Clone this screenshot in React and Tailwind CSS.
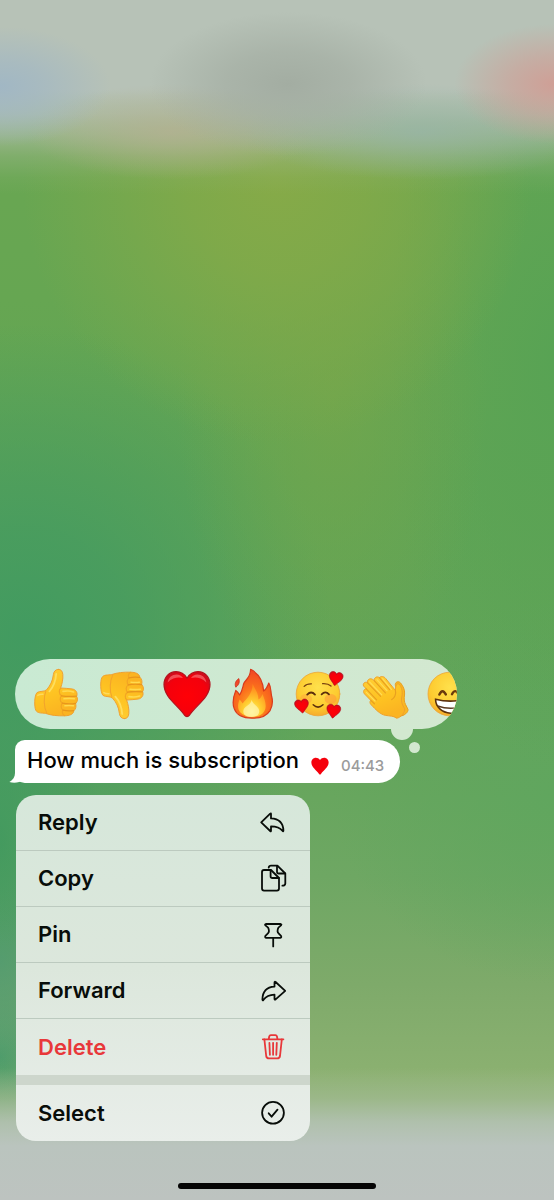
import { useState } from "react";
import clsx from "clsx";

const ReplyIcon = () => (
  <path d="M1.2 13.3 L10.2 4.6 Q11 4 11 5 V9.4 C18.5 9.8 23.2 14 23.4 21.6 Q23.3 23 22.4 21.8 C19.8 18.4 16.8 17.4 11 17.4 V21.7 Q11 22.8 10.2 22 Z" />
);

const CopyIcon = () => (
  <>
    <path d="M4 5 H11 L19 13 V23.6 Q19 25.6 17 25.6 H4 Q2 25.6 2 23.6 V7 Q2 5 4 5 Z" />
    <path d="M10.6 5.2 V11.2 Q10.6 13 12.4 13 H18.8" />
    <path d="M8.7 2.6 Q9 0.6 11 0.6 H17.4 L25.3 8.5 V18.4 Q25.3 20.6 22.4 20.7" />
    <path d="M17 0.8 V6.7 Q17 8.5 18.8 8.5 H25" />
  </>
);

const PinIcon = () => (
  <>
    <path d="M5.8 3 H20.7 Q22 3.4 21 4.4 L18.4 6.6 Q16.6 10.4 18.6 12.4 L21 14.8 Q21.8 16.6 20.4 16.8 H6 Q4.7 16.6 5.4 14.8 L7.9 12.4 Q9.9 10.4 8.1 6.6 L5.4 4.4 Q4.5 3.4 5.8 3 Z" />
    <path d="M13.2 17 V25.4" />
  </>
);

const ForwardIcon = () => (
  <path d="M25.2 13.9 L15.6 5 Q14.6 4.3 14.5 5.5 V9.6 C7 10 2.6 14.4 2.4 22.4 Q2.5 24 3.5 22.8 C6 19.4 8.8 17.8 14.5 17.6 V21.9 Q14.6 23.1 15.6 22.4 Z" />
);

const TrashIcon = () => (
  <>
    <path d="M2.8 6.3 H23.4 M8.7 6 L9.3 3.2 Q9.6 2.2 10.8 2.2 H15.4 Q16.6 2.2 16.9 3.2 L17.5 6" />
    <path d="M4.4 6.5 L6.2 23 Q6.6 25.4 9 25.4 H17.2 Q19.6 25.4 20 23 L21.8 6.5" />
    <path d="M9.4 9.8 L9.9 21.8 M13.1 9.8 V21.8 M16.8 9.8 L16.3 21.8" />
  </>
);

const SelectIcon = () => (
  <>
    <circle cx="13" cy="13.8" r="10.9" />
    <path d="M8.7 14.3 L11.6 17.7 L17.5 10.6" />
  </>
);

const actions = [
  { label: "Reply", Icon: ReplyIcon },
  { label: "Copy", Icon: CopyIcon },
  { label: "Pin", Icon: PinIcon },
  { label: "Forward", Icon: ForwardIcon },
  { label: "Delete", Icon: TrashIcon, danger: true },
];

const MenuItem = ({ label, Icon, danger }) => (
  <button
    type="button"
    role="menuitem"
    className={clsx(
      "flex h-14 w-full items-center justify-between px-[22px] text-[22px] font-semibold",
      danger ? "text-[#e8383a]" : "text-[#080d09]"
    )}
  >
    {label}
    <svg
      viewBox="0 0 28 28"
      className="h-7 w-7 overflow-visible"
      fill="none"
      stroke="currentColor"
      strokeWidth="1.8"
      strokeLinecap="round"
      strokeLinejoin="round"
      aria-hidden="true"
    >
      <Icon />
    </svg>
  </button>
);

const HEART =
  "M23 8.2 C20.2 3.6 16 1.7 12 1.7 C5 1.7 0 7.4 0 14.6 C0 27.4 13.6 35 20.4 45 Q23 48.2 25.6 45 C32.4 35 46 27.4 46 14.6 C46 7.4 41 1.7 34 1.7 C30 1.7 25.8 3.6 23 8.2 Z";

const Thumb = () => (
  <g strokeLinecap="round" strokeLinejoin="round">
    <path
      d="M26.4 -0.6 C23.4 -0.6 21.8 1.4 21.4 4.6 C20.6 11 18.4 15.4 14.6 19.8 C12.4 22 7.6 20.8 5 22.6 C2.2 25.6 2.2 37 3.8 40.2 C5.4 43.6 10 42.8 13.6 43.4 C19 45.4 26 46 32 45.8 C38 45.8 41.4 44.2 41.8 40.8 C44 39 44.4 36 43.6 33.6 C45.8 31.4 46 28.4 44.6 26.4 C46 23 44 19.6 40.4 19 C36 18.2 32.4 18.4 28.6 18 C30.2 13.4 31.2 9.2 30.8 4.4 C30.4 1 29.2 -0.6 26.4 -0.6 Z"
      fill="url(#skin)"
      stroke="#efa032"
      strokeWidth="1"
    />
    <path
      d="M28.8 18.4 C26.6 19.4 26.8 24.4 29.6 25.6 C27.6 27.4 27.6 32 30.4 33 C28.6 35 28.8 38.8 31 40 C29.8 42 30.4 44.6 32.6 45.6"
      fill="none"
      stroke="#f2a524"
      strokeWidth="1.2"
    />
    <path
      d="M29.6 25.8 C35 26.8 40 26.6 44.4 26.2 M30.4 33.2 C35 34.2 40 34 43.6 33.4 M31 40.2 C35 41.2 38 41.2 41.6 40.6"
      fill="none"
      stroke="#e8961c"
      strokeWidth="1.3"
    />
    <path
      d="M31 21.4 Q37 20.4 41.6 22 M32 28.8 Q37 28 42.4 28.8 M33 35.8 Q37 35.2 41.4 35.8"
      fill="none"
      stroke="#ffda50"
      strokeWidth="1.6"
    />
    <path d="M13.8 21.4 C11.4 27 11.8 37.4 14.6 42.6" fill="none" stroke="#f2a42c" strokeWidth="1.1" />
    <path d="M24.2 4 C23.6 11.6 21.4 17 17.4 21.4" fill="none" stroke="#ffde5e" strokeWidth="1.8" />
    <path d="M5.8 25.4 Q8 24 11 24.2" fill="none" stroke="#ffda5c" strokeWidth="1.4" />
  </g>
);

const ThumbDown = () => (
  <g transform="translate(0 48) scale(1 -1)">
    <Thumb />
  </g>
);

const Heart = () => (
  <g>
    <path d={HEART} fill="url(#heart)" stroke="#b3121d" strokeWidth="1.2" />
    <path
      d="M3.6 12.4 C4.6 7.4 8 4.8 12.6 4.6 C15.6 4.8 17.4 6 19 8 C15 7 9 7 3.6 12.4 Z M42.4 12.4 C41.4 7.4 38 4.8 33.4 4.6 C30.4 4.8 28.6 6 27 8 C31 7 37 7 42.4 12.4 Z"
      fill="#ff8d8d"
      opacity="0.55"
    />
  </g>
);

const Fire = () => (
  <g strokeLinejoin="round">
    <path
      d="M20.6 -0.7 C27 2.6 33 9.4 33.6 21 C36 19.4 37.6 16.4 38.8 13 C41.4 17.4 40.6 21.6 41.6 26 C43 31 42.4 36.4 40 40.6 C36.4 46.4 29 48.4 22 48.2 C14 48.2 6.6 45.4 4.2 38.6 C1.6 32 3.6 26 5.8 20.4 C7.4 21.4 8.6 23 9.6 25 C12 21.6 12.4 18.6 13.6 14 C15 9.6 20.6 8.4 20.6 -0.7 Z"
      fill="url(#flame)"
      stroke="#d93a1c"
      strokeWidth="1.2"
    />
    <path
      d="M8.8 8.6 C9.8 11.4 9.4 14.6 5.8 17.2 C4.4 13.8 5.6 10.8 8.8 8.6 Z"
      fill="#f0482a"
      stroke="#c9301c"
      strokeWidth="0.8"
    />
    <path
      d="M22.6 14 C25 19 28.6 23.4 28.4 29.6 C30.6 28.4 31.8 26.4 32.4 24 C36 32 37.4 39 32.6 43.4 C27 48 15 47.8 10.4 42.6 C7 38.6 7.8 33.4 9.6 29.4 C11 31 11.8 32 12.6 33.4 C16.6 28.6 22.6 23.6 22.6 14 Z"
      fill="url(#flameInner)"
    />
    <path
      d="M21.6 30 C23 34 26.6 35.6 28.4 38.4 C31 43 27.4 47 21.6 47 C15 47 11.8 43 14 38.8 C16 35.6 20.6 35 21.6 30 Z"
      fill="#fff6b0"
      opacity="0.7"
    />
  </g>
);

const FaceHearts = () => (
  <g fill="none" strokeLinecap="round">
    <circle cx="22" cy="24" r="21.8" fill="url(#face)" stroke="#eda436" strokeWidth="0.8" />
    <ellipse cx="10" cy="29" rx="6" ry="5" fill="#ff9d3c" opacity="0.4" />
    <ellipse cx="34.6" cy="29" rx="6" ry="5" fill="#ff8a3c" opacity="0.45" />
    <path d="M8.2 16.4 Q10.6 13.6 15.4 13.8 M26.6 13.6 Q32 13.2 35 16" stroke="#7a4310" strokeWidth="1.3" />
    <path d="M11.2 24.6 Q15.2 20.4 19 24.6 M25.6 24.4 Q29.4 20.4 33 24.4" stroke="#5c2f0c" strokeWidth="1.8" />
    <path d="M17.2 34.8 Q22 39.4 27 34.8" stroke="#5c2f0c" strokeWidth="1.5" />
    <g fill="url(#heart)" stroke="#a80f20" strokeWidth="2">
      <path d={HEART} transform="translate(34.2 0.4) rotate(10) scale(.3)" />
      <path d={HEART} transform="translate(-2 30) rotate(-8) scale(.3)" />
      <path d={HEART} transform="translate(31.6 33.2) rotate(8) scale(.3)" />
    </g>
  </g>
);

const Clap = () => (
  <g strokeLinecap="round" strokeLinejoin="round">
    <path
      d="M30 22 C34 23 34.6 19 33.4 15.6 C32.6 12 36.4 10.4 38.6 13 C41 16 43 19.6 42.6 24 C42 29 42 31.4 43.6 34.6 L46 39.4 C46.6 42 42 46 38.6 46 Z"
      fill="#f9b822"
      stroke="#e89c24"
      strokeWidth="1"
    />
    <path
      d="M17.4 7.6 C19 5.6 22 6.4 23.6 8.4 L33.4 20.4 C33.6 16.4 34.4 12.6 37 14 C40 17 41 22.6 39.6 28 C39 32 40.4 35 42.6 38.6 C43.6 42 38.6 48 34.6 48.2 C31.4 45.6 27.6 46.2 23.6 45.4 C18 44.4 13.6 39.4 9.4 35 C7.6 33.4 7.6 31.4 8.8 30.4 L2.6 24 C0.6 21.8 2 18.8 4.2 18.8 L1.6 16 C0.4 13.6 3 11.2 5.6 12.8 C4.4 10.2 8 7.6 10.6 9.4 L12.4 10.8 C11.4 8 15 5.6 17.4 7.6 Z"
      fill="url(#skin)"
      stroke="#eda030"
      strokeWidth="1"
    />
    <path
      d="M4.2 18.8 L14.6 29.8 M5.6 12.8 L18.6 26.4 M12.4 10.8 L23.4 22.8 M17.4 7.6 L27.6 19.6 M8.8 30.4 L12.4 33.8"
      fill="none"
      stroke="#e8a020"
      strokeWidth="1.2"
    />
    <path
      d="M7.6 12 L19.8 24.8 M15 9.6 L25 20.6 M4.4 22.4 L13 31 M20.6 8.6 L29.4 19.4"
      fill="none"
      stroke="#ffdc58"
      strokeWidth="1.2"
    />
    <path d="M33.4 20.4 C34.4 24 32.6 28 29.8 29.6" fill="none" stroke="#e8a020" strokeWidth="1.2" />
  </g>
);

const Grin = () => (
  <g fill="none" strokeLinecap="round">
    <circle cx="21.8" cy="24" r="21.8" fill="url(#face)" stroke="#eda436" strokeWidth="0.8" />
    <path d="M11.4 24.6 Q14.4 18 17.8 24.4 M24 24.2 Q27.2 18 30.6 24.4" stroke="#6b3a0c" strokeWidth="2.4" />
    <path
      d="M7.6 29.2 C16 31.4 27 31.6 36.4 29.6 C37.4 38 30.4 43.6 22.6 43.2 C14 42.6 7.4 37 7.6 29.2 Z"
      fill="#fff"
      stroke="#5c2f0c"
      strokeWidth="1.6"
    />
    <path d="M9.6 36 C17 38.6 27 38.8 35 36.4" stroke="#5c3a20" strokeWidth="1.5" />
  </g>
);

const reactions = [
  { name: "Thumbs up", Emoji: Thumb },
  { name: "Thumbs down", Emoji: ThumbDown },
  { name: "Heart", Emoji: Heart },
  { name: "Fire", Emoji: Fire },
  { name: "Smiling face with hearts", Emoji: FaceHearts },
  { name: "Clap", Emoji: Clap },
  { name: "Grin", Emoji: Grin },
];

// shared fills for the emoji
const Gradients = () => (
  <svg className="absolute h-0 w-0" aria-hidden="true">
    <defs>
      <linearGradient id="skin" x1="0" y1="0" x2="0.4" y2="1">
        <stop offset="0" stopColor="#ffcf36" />
        <stop offset="0.6" stopColor="#fec322" />
        <stop offset="1" stopColor="#fbb422" />
      </linearGradient>
      <radialGradient id="heart" cx="0.5" cy="0.55" r="0.6">
        <stop offset="0" stopColor="#ff0006" />
        <stop offset="0.75" stopColor="#f4000c" />
        <stop offset="1" stopColor="#cf0c1c" />
      </radialGradient>
      <radialGradient id="flame" cx="0.5" cy="0.75" r="0.75">
        <stop offset="0" stopColor="#ffb428" />
        <stop offset="0.5" stopColor="#fb701c" />
        <stop offset="1" stopColor="#f04424" />
      </radialGradient>
      <radialGradient id="flameInner" cx="0.5" cy="0.85" r="0.8">
        <stop offset="0" stopColor="#fff08c" />
        <stop offset="0.4" stopColor="#ffcf30" />
        <stop offset="1" stopColor="#ff841c" />
      </radialGradient>
      <radialGradient id="face" cx="0.5" cy="0.35" r="0.65">
        <stop offset="0" stopColor="#ffe14c" />
        <stop offset="0.7" stopColor="#fdcb30" />
        <stop offset="1" stopColor="#f6ac2c" />
      </radialGradient>
    </defs>
  </svg>
);

// green wallpaper first, then the grey bars over it, then the colours that show through the top bar
const Backdrop = () => (
  <div className="absolute inset-0 -z-10 bg-[linear-gradient(180deg,#6ca652_0%,#66a652_25%,#60a455_40%,#62a559_60%,#6ea763_73%,#7eaa6a_82%,#8cb171_90%,#94b67a_100%)]">
    <div className="absolute inset-0 bg-[radial-gradient(ellipse_46%_22%_at_50%_15%,#86aa48_0%,#84aa48cc_35%,#84aa4800_100%),radial-gradient(ellipse_28%_26%_at_60%_33%,#76a64aaa_0%,#72a65000_100%),radial-gradient(ellipse_56%_26%_at_4%_53%,#429b60_0%,#449b60cc_35%,#429b6000_100%),radial-gradient(ellipse_18%_22%_at_0%_70%,#449a5e_0%,#449a5e00_100%),radial-gradient(ellipse_14%_9%_at_0%_80%,#6a9f82_0%,#6a9f8200_100%),radial-gradient(ellipse_14%_7%_at_0%_88%,#4f9d6c_0%,#4f9d6c00_100%),radial-gradient(ellipse_30%_34%_at_100%_30%,#58a354_0%,#56a35500_100%),radial-gradient(ellipse_40%_16%_at_100%_66%,#60a65e_0%,#60a65e00_100%)]" />
    <div className="absolute inset-0 bg-[linear-gradient(180deg,#b7c2b7_0%,#b7c2b7_7.5%,#b5c1b4dd_9.5%,#b0bea8aa_11.2%,#a6ba9660_13%,#9ab88420_14.8%,#9ab88400_16.2%,#a6bc9a00_89%,#a6bc9a90_91.5%,#b4c2b4e0_93.5%,#bac4be_95.5%,#bdc3c0_100%)]" />
    <div className="absolute inset-0 bg-[radial-gradient(ellipse_20%_5%_at_0%_7.2%,#a1b7c4_0%,#a1b7c4aa_40%,#a1b7c400_100%),radial-gradient(ellipse_18%_5%_at_100%_7%,#cf9f96_0%,#cf9f9699_45%,#cf9f9600_100%),radial-gradient(ellipse_25%_6%_at_52%_7%,#a3ada2_0%,#a3ada2aa_45%,#a3ada200_100%),radial-gradient(ellipse_32%_4%_at_76%_11%,#96b4a8bb_0%,#96b4a800_100%),radial-gradient(ellipse_26%_4%_at_31%_11%,#b5b092bb_0%,#b5b09200_100%)]" />
  </div>
);

const App = () => {
  const [picked, setPicked] = useState("Heart");

  return (
    <main className="relative isolate flex min-h-screen flex-col justify-end overflow-hidden pb-[11px] font-['Inter',sans-serif]">
      <Backdrop />
      <Gradients />
      <div className="flex flex-col items-start px-[15px]">
        <div className="relative w-[442px] max-w-full">
          <div className="flex h-[70px] items-center gap-[18px] overflow-hidden rounded-full bg-linear-to-r from-[#c9ead3] to-[#d3e8d0] pl-[17px]">
            {reactions.map(({ name, Emoji }) => (
              <button
                key={name}
                type="button"
                aria-label={name}
                aria-pressed={picked === name}
                className="h-12 w-12 shrink-0"
                onClick={() => setPicked(name)}
              >
                <svg viewBox="0 0 48 48" className="h-12 w-12 overflow-visible">
                  <Emoji />
                </svg>
              </button>
            ))}
          </div>
          <span className="absolute top-full right-11 h-[11px] w-[22px] rounded-b-full bg-[#d2e8cf]" />
          <span className="absolute top-full right-[37px] mt-[13px] h-[11px] w-[11px] rounded-full bg-[#d2e8cf]" />
        </div>

        <div className="relative mt-[11px] flex h-[43px] items-center rounded-[22px] rounded-l-[10px] bg-white pr-4 pl-3">
          <svg viewBox="0 0 20 20" className="absolute bottom-0 -left-1.5 h-5 w-5" aria-hidden="true">
            <path d="M6 2 V10 C6 14 4 17 0.4 19 C5 20.4 11 19.6 14 17 L18 12 Z" fill="#fff" />
          </svg>
          <p className="relative pb-0.5 text-[22px] font-medium text-black">How much is subscription</p>
          <svg viewBox="0 0 46 48" className="mt-2 ml-3 h-[18px] w-[18px]" aria-label="heart">
            <path d={HEART} fill="#f5000c" />
          </svg>
          <time className="mt-2.5 ml-3 text-[15px] font-medium text-[#9b9b9b]">04:43</time>
        </div>

        <div
          role="menu"
          className="mt-3 ml-px w-[294px] max-w-full overflow-hidden rounded-[20px] bg-linear-to-b from-[#d6e7da] via-[#dce7dc] to-[#e9eeea]"
        >
          <div className="divide-y divide-[#bccabf]">
            {actions.map((action) => (
              <MenuItem key={action.label} {...action} />
            ))}
          </div>
          <div className="h-2.5 bg-[#cdd6cc]" />
          <MenuItem label="Select" Icon={SelectIcon} />
        </div>
      </div>
      <div className="mx-auto mt-[42px] h-1.5 w-[198px] rounded-full bg-[#050505]" />
    </main>
  );
};

export default App;
